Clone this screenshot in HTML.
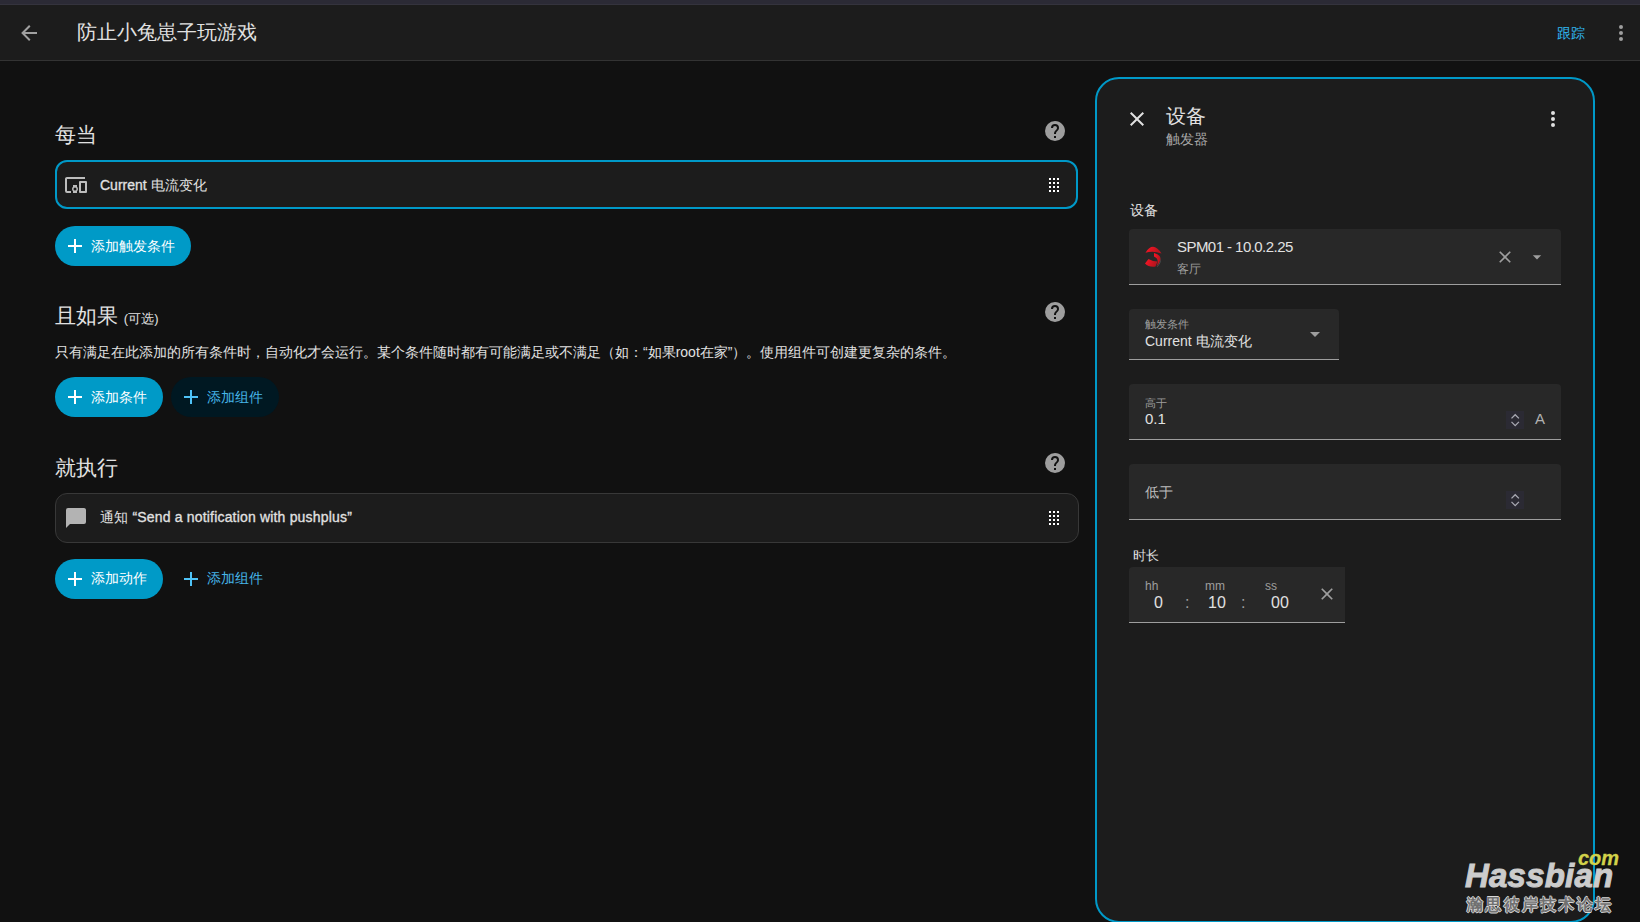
<!DOCTYPE html>
<html><head><meta charset="utf-8">
<style>
*{box-sizing:border-box;margin:0;padding:0}
html,body{width:1640px;height:922px;overflow:hidden;background:#111111;font-family:"Liberation Sans",sans-serif;color:#e1e1e1}
.abs{position:absolute}
svg{display:block}
#topstrip{left:0;top:0;width:1640px;height:5px;background:#2b2a35;border-bottom:1px solid #34333d}
#header{left:0;top:5px;width:1640px;height:56px;background:#1c1c1c;border-bottom:1px solid #333333}
.title{font-size:20px;line-height:24px;color:#e1e1e1;white-space:nowrap}
.h2{font-size:21px;line-height:26px;color:#e1e1e1;white-space:nowrap}
.txt14{font-size:14px;line-height:20px;white-space:nowrap}
.card{border-radius:12px;background:#1c1c1c}
.btn{border-radius:20px;height:40px;background:#009ac7;color:#fff}
.btn2{border-radius:20px;height:40px;background:#001822;color:#46b5e8}
.help{width:20px;height:20px;border-radius:50%;background:#9e9e9e}
#panel{left:1095px;top:77px;width:500px;height:846px;border:2px solid #0099c8;border-radius:24px;background:#1c1c1c}
.field{background:#282828;border-radius:4px 4px 0 0;border-bottom:1px solid #9e9e9e}
.spin{width:18px;height:18px;background:#2b2a33}
.dlab{font-size:12px;line-height:14px;color:#9e9e9e;white-space:nowrap}
.dval{font-size:16px;line-height:18px;white-space:nowrap}
</style></head>
<body>
<div class="abs" id="topstrip"></div>
<div class="abs" id="header"></div>
<!-- back arrow -->
<svg class="abs" style="left:17px;top:21px" width="24" height="24" viewBox="0 0 24 24"><path fill="#a0a0a0" d="M20,11V13H8L13.5,18.5L12.08,19.92L4.16,12L12.08,4.08L13.5,5.5L8,11H20Z"/></svg>
<div class="abs title" style="left:77px;top:20px">防止小兔崽子玩游戏</div>
<div class="abs txt14" style="left:1557px;top:23px;color:#30b8f2">跟踪</div>
<svg class="abs" style="left:1609px;top:21px" width="24" height="24" viewBox="0 0 24 24"><path fill="#9e9e9e" d="M12,16A2,2 0 0,1 14,18A2,2 0 0,1 12,20A2,2 0 0,1 10,18A2,2 0 0,1 12,16M12,10A2,2 0 0,1 14,12A2,2 0 0,1 12,14A2,2 0 0,1 10,12A2,2 0 0,1 12,10M12,4A2,2 0 0,1 14,6A2,2 0 0,1 12,8A2,2 0 0,1 10,6A2,2 0 0,1 12,4Z"/></svg>

<!-- Section 1 -->
<div class="abs h2" style="left:55px;top:122px">每当</div>
<svg class="abs" style="left:1043px;top:119px" width="24" height="24" viewBox="0 0 24 24"><path fill="#9e9e9e" d="M15.07,11.25L14.17,12.17C13.45,12.89 13,13.5 13,15H11V14.5C11,13.39 11.45,12.39 12.17,11.67L13.41,10.41C13.78,10.05 14,9.55 14,9C14,7.89 13.1,7 12,7A2,2 0 0,0 10,9H8A4,4 0 0,1 12,5A4,4 0 0,1 16,9C16,9.88 15.64,10.670 15.07,11.25M13,19H11V17H13M12,2A10,10 0 0,0 2,12A10,10 0 0,0 12,22A10,10 0 0,0 22,12C22,6.47 17.5,2 12,2Z"/></svg>
<div class="abs card" style="left:55px;top:160px;width:1023px;height:49px;border:2px solid #0099c8"></div>
<svg class="abs" style="left:64px;top:173px" width="24" height="24" viewBox="0 0 24 24"><path fill="#bdbdbd" d="M3,6H21V4H3C1.89,4 1,4.89 1,6V18A2,2 0 0,0 3,20H7V18H3V6M13,12H9V13.780C8.39,14.33 8,15.11 8,16C8,16.89 8.39,17.67 9,18.22V20H13V18.22C13.61,17.670 14,16.88 14,16S13.61,14.33 13,13.78V12M11,17.5A1.5,1.5 0 0,1 9.5,16A1.5,1.5 0 0,1 11,14.5A1.5,1.5 0 0,1 12.5,16A1.5,1.5 0 0,1 11,17.5M22,8H16A1,1 0 0,0 15,9V19A1,1 0 0,0 16,20H22A1,1 0 0,0 23,19V9A1,1 0 0,0 22,8M21,18H17V10H21V18Z"/></svg>
<svg class="abs" style="left:1042px;top:173px" width="24" height="24" viewBox="0 0 24 24"><path fill="#ffffff" d="M7,19V17H9V19H7M11,19V17H13V19H11M15,19V17H17V19H15M7,15V13H9V15H7M11,15V13H13V15H11M15,15V13H17V15H15M7,11V9H9V11H7M11,11V9H13V11H11M15,11V9H17V11H15M7,7V5H9V7H7M11,7V5H13V7H11M15,7V5H17V7H15Z"/></svg>
<div class="abs txt14" style="left:100px;top:175px"><span style="-webkit-text-stroke:0.3px #e1e1e1">Current</span> 电流变化</div>
<div class="abs btn" style="left:55px;top:226px;width:136px"></div>
<div class="abs txt14" style="left:91px;top:236px;color:#fff">添加触发条件</div>
<svg class="abs" style="left:63px;top:234px" width="24" height="24" viewBox="0 0 24 24"><path fill="#fff" d="M19,13H13V19H11V13H5V11H11V5H13V11H19V13Z"/></svg>

<!-- Section 2 -->
<div class="abs h2" style="left:55px;top:303px">且如果 <span style="font-size:13px">(可选)</span></div>
<svg class="abs" style="left:1043px;top:300px" width="24" height="24" viewBox="0 0 24 24"><path fill="#9e9e9e" d="M15.07,11.25L14.17,12.17C13.45,12.89 13,13.5 13,15H11V14.5C11,13.39 11.45,12.39 12.17,11.67L13.41,10.41C13.78,10.05 14,9.55 14,9C14,7.89 13.1,7 12,7A2,2 0 0,0 10,9H8A4,4 0 0,1 12,5A4,4 0 0,1 16,9C16,9.88 15.64,10.670 15.07,11.25M13,19H11V17H13M12,2A10,10 0 0,0 2,12A10,10 0 0,0 12,22A10,10 0 0,0 22,12C22,6.47 17.5,2 12,2Z"/></svg>
<div class="abs txt14" style="left:55px;top:342px">只有满足在此添加的所有条件时，自动化才会运行。某个条件随时都有可能满足或不满足（如：“如果root在家”）。使用组件可创建更复杂的条件。</div>
<div class="abs btn" style="left:55px;top:377px;width:108px"></div>
<div class="abs txt14" style="left:91px;top:387px;color:#fff">添加条件</div>
<svg class="abs" style="left:63px;top:385px" width="24" height="24" viewBox="0 0 24 24"><path fill="#fff" d="M19,13H13V19H11V13H5V11H11V5H13V11H19V13Z"/></svg>
<div class="abs btn2" style="left:171px;top:377px;width:108px"></div>
<div class="abs txt14" style="left:207px;top:387px;color:#46b5e8">添加组件</div>
<svg class="abs" style="left:179px;top:385px" width="24" height="24" viewBox="0 0 24 24"><path fill="#4fc3f7" d="M19,13H13V19H11V13H5V11H11V5H13V11H19V13Z"/></svg>

<!-- Section 3 -->
<div class="abs h2" style="left:55px;top:455px">就执行</div>
<svg class="abs" style="left:1043px;top:451px" width="24" height="24" viewBox="0 0 24 24"><path fill="#9e9e9e" d="M15.07,11.25L14.17,12.17C13.45,12.89 13,13.5 13,15H11V14.5C11,13.39 11.45,12.39 12.17,11.67L13.41,10.41C13.78,10.05 14,9.55 14,9C14,7.89 13.1,7 12,7A2,2 0 0,0 10,9H8A4,4 0 0,1 12,5A4,4 0 0,1 16,9C16,9.88 15.64,10.670 15.07,11.25M13,19H11V17H13M12,2A10,10 0 0,0 2,12A10,10 0 0,0 12,22A10,10 0 0,0 22,12C22,6.47 17.5,2 12,2Z"/></svg>
<div class="abs card" style="left:55px;top:493px;width:1024px;height:50px;border:1px solid #383838"></div>
<svg class="abs" style="left:1042px;top:506px" width="24" height="24" viewBox="0 0 24 24"><path fill="#ffffff" d="M7,19V17H9V19H7M11,19V17H13V19H11M15,19V17H17V19H15M7,15V13H9V15H7M11,15V13H13V15H11M15,15V13H17V15H15M7,11V9H9V11H7M11,11V9H13V11H11M15,11V9H17V11H15M7,7V5H9V7H7M11,7V5H13V7H11M15,7V5H17V7H15Z"/></svg>
<svg class="abs" style="left:64px;top:506px" width="24" height="24" viewBox="0 0 24 24"><path fill="#b3b3b3" d="M20,2H4A2,2 0 0,0 2,4V22L6,18H20A2,2 0 0,0 22,16V4C22,2.89 21.1,2 20,2Z"/></svg>
<div class="abs txt14" style="left:100px;top:507px;letter-spacing:0.18px">通知 <span style="-webkit-text-stroke:0.3px #e1e1e1">“Send a notification with pushplus”</span></div>
<div class="abs btn" style="left:55px;top:559px;width:108px"></div>
<div class="abs txt14" style="left:91px;top:568px;color:#fff">添加动作</div>
<svg class="abs" style="left:63px;top:567px" width="24" height="24" viewBox="0 0 24 24"><path fill="#fff" d="M19,13H13V19H11V13H5V11H11V5H13V11H19V13Z"/></svg>
<div class="abs txt14" style="left:207px;top:568px;color:#46b5e8">添加组件</div>
<svg class="abs" style="left:179px;top:567px" width="24" height="24" viewBox="0 0 24 24"><path fill="#4fc3f7" d="M19,13H13V19H11V13H5V11H11V5H13V11H19V13Z"/></svg>

<!-- Panel -->
<div class="abs" id="panel"></div>
<svg class="abs" style="left:1125px;top:107px" width="24" height="24" viewBox="0 0 24 24"><path fill="#e1e1e1" d="M19,6.41L17.59,5L12,10.59L6.41,5L5,6.41L10.59,12L5,17.59L6.41,19L12,13.41L17.59,19L19,17.59L13.41,12L19,6.41Z"/></svg>
<div class="abs title" style="left:1166px;top:104px">设备</div>
<div class="abs txt14" style="left:1166px;top:129px;color:#a8a8a8">触发器</div>
<svg class="abs" style="left:1541px;top:107px" width="24" height="24" viewBox="0 0 24 24"><path fill="#e1e1e1" d="M12,16A2,2 0 0,1 14,18A2,2 0 0,1 12,20A2,2 0 0,1 10,18A2,2 0 0,1 12,16M12,10A2,2 0 0,1 14,12A2,2 0 0,1 12,14A2,2 0 0,1 10,12A2,2 0 0,1 12,10M12,4A2,2 0 0,1 14,6A2,2 0 0,1 12,8A2,2 0 0,1 10,6A2,2 0 0,1 12,4Z"/></svg>

<div class="abs txt14" style="left:1130px;top:200px">设备</div>
<div class="abs field" style="left:1129px;top:229px;width:432px;height:56px"></div>
<svg class="abs" style="left:1140px;top:242px" width="28" height="30" viewBox="0 0 28 30">
<defs><linearGradient id="lg" x1="0" y1="0" x2="1" y2="0.3"><stop offset="0" stop-color="#ff1424"/><stop offset="1" stop-color="#b3141e"/></linearGradient></defs>
<path fill="#4a5050" d="M17,24.5 Q21.5,19 20.2,15 Q22.5,19.5 17.5,25 Z"/>
<path fill="url(#lg)" d="M5.5,10.8 Q13,-1.5 21.5,11.5 Q13,8.45 5.5,10.8 Z"/>
<path fill="url(#lg)" d="M14,11 Q25.5,14 16.5,24.5 Q19.9,17 14,14.5 Z"/>
<path fill="url(#lg)" d="M5,21.5 L8.5,17 Q13,19.5 17.5,19.5 L15.5,24.5 Q9,25.5 5,21.5 Z"/>
</svg>
<div class="abs" style="left:1177px;top:237px;font-size:15px;line-height:20px;letter-spacing:-0.55px;white-space:nowrap">SPM01 - 10.0.2.25</div>
<div class="abs" style="left:1177px;top:261px;font-size:12px;line-height:16px;color:#9e9e9e;white-space:nowrap">客厅</div>
<svg class="abs" style="left:1495px;top:247px" width="20" height="20" viewBox="0 0 24 24"><path fill="#9e9e9e" d="M19,6.41L17.59,5L12,10.59L6.41,5L5,6.41L10.59,12L5,17.59L6.41,19L12,13.41L17.59,19L19,17.59L13.41,12L19,6.41Z"/></svg>
<svg class="abs" style="left:1527px;top:247px" width="20" height="20" viewBox="0 0 24 24"><path fill="#9e9e9e" d="M7,10L12,15L17,10H7Z"/></svg>

<div class="abs field" style="left:1129px;top:309px;width:210px;height:51px"></div>
<div class="abs" style="left:1145px;top:317px;font-size:11px;line-height:14px;color:#9e9e9e;white-space:nowrap">触发条件</div>
<div class="abs txt14" style="left:1145px;top:331px">Current 电流变化</div>
<svg class="abs" style="left:1303px;top:322px" width="24" height="24" viewBox="0 0 24 24"><path fill="#9e9e9e" d="M7,10L12,15L17,10H7Z"/></svg>

<div class="abs field" style="left:1129px;top:384px;width:432px;height:56px"></div>
<div class="abs" style="left:1145px;top:396px;font-size:11px;line-height:14px;color:#9e9e9e;white-space:nowrap">高于</div>
<div class="abs" style="left:1145px;top:410px;font-size:15px;line-height:18px;white-space:nowrap">0.1</div>
<div class="abs spin" style="left:1506px;top:411px"><svg width="18" height="18" viewBox="0 0 18 18" style="display:block"><path d="M5.5,7.4L9.2,3.7L12.9,7.4M5.5,10.9L9.2,14.6L12.9,10.9" fill="none" stroke="#a9a9b3" stroke-width="1.3"/></svg></div>
<div class="abs" style="left:1535px;top:410px;font-size:15px;line-height:18px;color:#b0b0b0;white-space:nowrap">A</div>

<div class="abs field" style="left:1129px;top:464px;width:432px;height:56px"></div>
<div class="abs txt14" style="left:1145px;top:482px;color:#bdbdbd">低于</div>
<div class="abs spin" style="left:1506px;top:491px"><svg width="18" height="18" viewBox="0 0 18 18" style="display:block"><path d="M5.5,7.4L9.2,3.7L12.9,7.4M5.5,10.9L9.2,14.6L12.9,10.9" fill="none" stroke="#a9a9b3" stroke-width="1.3"/></svg></div>

<div class="abs" style="left:1133px;top:547px;font-size:13px;line-height:18px;white-space:nowrap">时长</div>
<div class="abs field" style="left:1129px;top:567px;width:216px;height:56px;border-radius:4px 0 0 0"></div>
<div class="abs dlab" style="left:1145px;top:579px">hh</div>
<div class="abs dval" style="left:1154px;top:594px">0</div>
<div class="abs dval" style="left:1185px;top:594px;color:#9e9e9e">:</div>
<div class="abs dlab" style="left:1205px;top:579px">mm</div>
<div class="abs dval" style="left:1208px;top:594px">10</div>
<div class="abs dval" style="left:1241px;top:594px;color:#9e9e9e">:</div>
<div class="abs dlab" style="left:1265px;top:579px">ss</div>
<div class="abs dval" style="left:1271px;top:594px">00</div>
<svg class="abs" style="left:1317px;top:584px" width="20" height="20" viewBox="0 0 24 24"><path fill="#9e9e9e" d="M19,6.41L17.59,5L12,10.59L6.41,5L5,6.41L10.59,12L5,17.59L6.41,19L12,13.41L17.59,19L19,17.59L13.41,12L19,6.41Z"/></svg>
<div class="abs" style="left:1464px;top:853px;width:160px;height:70px">
<div class="abs" style="left:114px;top:-7px;font-size:20px;line-height:24px;font-style:italic;font-weight:bold;color:#d2d24a;white-space:nowrap;-webkit-text-stroke:0.3px #d2d24a">com</div>
<div class="abs" style="left:1px;top:4px;font-size:33px;line-height:38px;font-style:italic;font-weight:bold;color:#cccccc;white-space:nowrap;letter-spacing:0.2px;-webkit-text-stroke:1px #cccccc">Hassbian</div>
<div class="abs" style="left:3px;top:42px;font-size:16px;line-height:20px;font-weight:bold;color:#707070;white-space:nowrap;letter-spacing:2.3px;text-shadow:0.7px 0 0 #d8d8d8,-0.7px 0 0 #d8d8d8,0 0.7px 0 #d8d8d8,0 -0.7px 0 #d8d8d8">瀚思彼岸技术论坛</div>
</div>
</body></html>
